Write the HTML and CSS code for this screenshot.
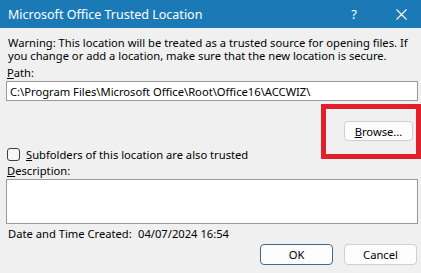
FILE: index.html
```html
<!DOCTYPE html>
<html lang="en">
<head>
<link rel="stylesheet" href="styles.css">
</head>
<body>

<div class="dialog">
  <header class="titlebar">
    <span class="title">Microsoft Office Trusted Location</span>
    <span class="help">?</span>
    <svg class="close" width="11" height="11" viewBox="0 0 11 11">
      <path d="M0.5 0.5 L10.5 10.5 M10.5 0.5 L0.5 10.5" stroke="#fff" stroke-width="1.1" fill="none"/>
    </svg>
  </header>

  <div class="content">
    <p class="warning">Warning: This location will be treated as a trusted source for opening files. If you change or add a location, make sure that the new location is secure.</p>

    <label class="label" for="path"><u>P</u>ath:</label>
    <input class="field" id="path" type="text" value="C:\Program Files\Microsoft Office\Root\Office16\ACCWIZ\">

    <div class="browse-row">
      <button class="btn browse"><u>B</u>rowse...</button>
    </div>

    <div class="check-row">
      <span class="checkbox"></span>
      <span><u>S</u>ubfolders of this location are also trusted</span>
    </div>

    <label class="label desc-label" for="desc"><u>D</u>escription:</label>
    <textarea class="field desc" id="desc"></textarea>

    <div class="created">
      <span class="created-label">Date and Time Created:</span>
      <span>04/07/2024 16:54</span>
    </div>

    <div class="actions">
      <button class="btn ok">OK</button>
      <button class="btn cancel">Cancel</button>
    </div>
  </div>

  <div class="highlight"></div>
</div>

</body>
</html>
```

FILE: styles.css
```css
body {
  margin: 0;
  padding: 0;
  background-color: #f0f0f0;
  font-family: "Noto Sans", Arial, sans-serif;
  font-size: 11.2px;
  color: #000;
}

.dialog {
  position: relative;
  width: 421px;
  height: 273px;
  overflow: hidden;
  background-color: #f0f0f0;
}

.titlebar {
  display: flex;
  align-items: center;
  height: 28px;
  padding-left: 8px;
  background-color: #1b7ab6;
  color: #fff;
}

.title {
  font-size: 12.5px;
  flex: 1;
}

.help {
  font-size: 13px;
  margin-right: 39px;
}

.close {
  margin-right: 14px;
}

.content {
  display: flex;
  flex-direction: column;
  padding: 0 3px 0 6px;
}

.warning {
  margin: 8px 0 0 2px;
  line-height: 13px;
}

.label {
  margin: 4px 0 0 1px;
  line-height: 13px;
}

.field {
  box-sizing: border-box;
  width: 412px;
  height: 20px;
  margin: 2px 0 0 0;
  padding: 0 3px;
  border: 1px solid #9a9a9a;
  background-color: #fff;
  font-family: inherit;
  font-size: 11.2px;
  color: #000;
}

.browse-row {
  display: flex;
  justify-content: flex-end;
  margin-top: 20px;
}

.btn {
  box-sizing: border-box;
  height: 20px;
  padding: 0;
  border: 1px solid #d0d0d0;
  border-radius: 4px;
  background-color: #fdfdfd;
  font-family: inherit;
  font-size: 11.2px;
  color: #000;
}

.browse {
  width: 69px;
  margin-right: 5px;
}

.check-row {
  display: flex;
  align-items: center;
  gap: 6px;
  margin: 7px 0 0 1px;
  line-height: 13px;
}

.checkbox {
  box-sizing: border-box;
  width: 13px;
  height: 13px;
  border: 1px solid #404040;
  border-radius: 3px;
  background-color: #f7f7f7;
}

.desc-label {
  margin-top: 3px;
}

.desc {
  height: 45px;
  resize: none;
}

.created {
  display: flex;
  margin: 3px 0 0 2px;
  line-height: 13px;
}

.created-label {
  width: 130px;
}

.actions {
  display: flex;
  justify-content: flex-end;
  gap: 11px;
  margin: 4px 1px 0 0;
}

.actions .btn {
  width: 73px;
  height: 21px;
}

.ok {
  border-color: #3a6d88;
}

.highlight {
  position: absolute;
  left: 321px;
  top: 104px;
  width: 100px;
  height: 55px;
  box-sizing: border-box;
  border: 5px solid #e21f2b;
}
```
